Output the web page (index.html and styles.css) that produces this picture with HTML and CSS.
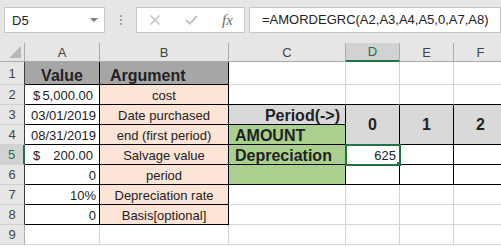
FILE: index.html
```html
<!DOCTYPE html>
<html lang="en">
  <head>
    <meta charset="UTF-8" />
    <title>AMORDEGRC</title>
    <link rel="stylesheet" href="styles.css">
  </head>
  <body>
    <div class="formula-bar">
      <div class="name-box"><span>D5</span><i class="drop"></i></div>
      <div class="grip"><i></i><i></i><i></i></div>
      <div class="fx-buttons">
        <svg class="btn-x" width="10" height="10" viewBox="0 0 10 10">
          <path d="M0.5 0.5 L9.5 9.5 M9.5 0.5 L0.5 9.5" stroke="#bdbdbd" stroke-width="1.3" fill="none" />
        </svg>
        <svg class="btn-ok" width="13" height="10" viewBox="0 0 13 10">
          <path d="M1 5 L4.8 8.6 L12 1" stroke="#c2c2c2" stroke-width="2" fill="none" />
        </svg>
        <span class="fx">fx</span>
      </div>
      <div class="formula">=AMORDEGRC(A2,A3,A4,A5,0,A7,A8)</div>
    </div>

    <div class="sheet">
      <div class="corner"><i></i></div>
      <div class="ch">A</div>
      <div class="ch">B</div>
      <div class="ch">C</div>
      <div class="ch active">D</div>
      <div class="ch">E</div>
      <div class="ch">F</div>

      <div class="rh edge">1</div>
      <div class="cell bx hd ctr">Value</div>
      <div class="cell bx hd arg">Argument</div>
      <div class="cell"></div>
      <div class="cell"></div>
      <div class="cell"></div>
      <div class="cell"></div>

      <div class="rh edge">2</div>
      <div class="cell bx acct"><span>$</span><span>5,000.00</span></div>
      <div class="cell bx peach ctr">cost</div>
      <div class="cell bb"></div>
      <div class="cell bb"></div>
      <div class="cell bb"></div>
      <div class="cell bb"></div>

      <div class="rh edge">3</div>
      <div class="cell bx num">03/01/2019</div>
      <div class="cell bx peach ctr">Date purchased</div>
      <div class="cell bx grey bold right">Period(-&gt;)</div>
      <div class="cell bx grey merge">0</div>
      <div class="cell bx grey merge">1</div>
      <div class="cell bx grey merge">2</div>

      <div class="rh edge">4</div>
      <div class="cell bx num">08/31/2019</div>
      <div class="cell bx peach ctr">end (first period)</div>
      <div class="cell bx green bold label">AMOUNT</div>

      <div class="rh edge active">5</div>
      <div class="cell bx acct"><span>$</span><span>200.00</span></div>
      <div class="cell bx peach ctr">Salvage value</div>
      <div class="cell bx green bold label">Depreciation</div>
      <div class="cell bx num sel">625</div>
      <div class="cell bx"></div>
      <div class="cell bx"></div>

      <div class="rh edge">6</div>
      <div class="cell bx num">0</div>
      <div class="cell bx peach ctr">period</div>
      <div class="cell bx green"></div>
      <div class="cell bx"></div>
      <div class="cell bx"></div>
      <div class="cell bx"></div>

      <div class="rh edge">7</div>
      <div class="cell bx num">10%</div>
      <div class="cell bx peach ctr">Depreciation rate</div>
      <div class="cell"></div>
      <div class="cell"></div>
      <div class="cell"></div>
      <div class="cell"></div>

      <div class="rh edge">8</div>
      <div class="cell bx num">0</div>
      <div class="cell bx peach ctr">Basis[optional]</div>
      <div class="cell"></div>
      <div class="cell"></div>
      <div class="cell"></div>
      <div class="cell"></div>

      <div class="rh">9</div>
      <div class="cell"></div>
      <div class="cell"></div>
      <div class="cell"></div>
      <div class="cell"></div>
      <div class="cell"></div>
      <div class="cell"></div>
    </div>
  </body>
</html>
```

FILE: styles.css
```css
body {
  margin: 0;
  width: 501px;
  height: 247px;
  overflow: hidden;
  background: #fff;
  font-family: "Liberation Sans", Arial, sans-serif;
}

/* formula bar */
.formula-bar {
  display: flex;
  align-items: flex-start;
  height: 43px;
  padding-top: 7px;
  box-sizing: border-box;
  background: #e6e6e6;
}

.name-box {
  display: flex;
  align-items: center;
  justify-content: space-between;
  width: 101px;
  height: 26px;
  margin-left: 4px;
  padding: 0 6px 0 7px;
  box-sizing: border-box;
  border: 1px solid #c6c6c6;
  background: #fff;
  font-size: 13px;
  color: #222;
}

.drop {
  border-left: 4px solid transparent;
  border-right: 4px solid transparent;
  border-top: 4px solid #7a7a7a;
}

.grip {
  display: flex;
  flex-direction: column;
  align-items: center;
  justify-content: center;
  gap: 2px;
  width: 31px;
  height: 26px;
}

.grip i {
  width: 2px;
  height: 2px;
  background: #a3a3a3;
}

.fx-buttons {
  display: flex;
  align-items: center;
  width: 109px;
  height: 26px;
  padding-left: 13px;
  box-sizing: border-box;
  border: 1px solid #c6c6c6;
  background: #fff;
}

.btn-ok {
  margin-left: 25px;
}

.fx {
  margin-left: 24px;
  font-family: "Liberation Serif", "Times New Roman", serif;
  font-style: italic;
  font-size: 15px;
  color: #6c6c6c;
}

.formula {
  flex: 1;
  height: 26px;
  margin-left: 4px;
  padding-left: 12px;
  box-sizing: border-box;
  border: 1px solid #c6c6c6;
  background: #fff;
  font-size: 13px;
  line-height: 24px;
  color: #222;
}

/* sheet grid */
.sheet {
  display: grid;
  grid-template-columns: 25px 75px 129px 117px 54px 54px 54px;
  grid-template-rows: 19px 23px repeat(8, 20px);
}

.corner {
  display: flex;
  align-items: flex-end;
  justify-content: flex-end;
  padding: 0 3px 3px 0;
  background: #e6e6e6;
  border-right: 1px solid #ababab;
  border-bottom: 1px solid #ababab;
}

.corner i {
  border-left: 12px solid transparent;
  border-bottom: 12px solid #b8b8b8;
}

.ch {
  display: flex;
  align-items: center;
  justify-content: center;
  background: #e6e6e6;
  border-right: 1px solid #ababab;
  border-bottom: 1px solid #ababab;
  font-size: 13px;
  color: #444;
}

.ch.active {
  background: #d2d2d2;
  border-bottom: 2px solid #217346;
  color: #217346;
}

.rh {
  display: flex;
  align-items: center;
  justify-content: center;
  background: #e6e6e6;
  border-right: 1px solid #ababab;
  border-bottom: 1px solid #d0d0d0;
  font-size: 13px;
  color: #444;
}

.rh.edge {
  border-right-color: #3c3c3c;
}

.rh.active {
  background: #d2d2d2;
  border-right: 2px solid #217346;
  color: #217346;
}

.cell {
  display: flex;
  align-items: flex-end;
  padding: 0 3px;
  overflow: hidden;
  white-space: nowrap;
  border-right: 1px solid #d4d4d4;
  border-bottom: 1px solid #d4d4d4;
  font-size: 13px;
  line-height: 17px;
  color: #222;
}

.bx {
  border-color: #000;
}

.bb {
  border-bottom-color: #000;
}

.ctr {
  justify-content: center;
}

.num {
  justify-content: flex-end;
}

.acct {
  justify-content: space-between;
  padding: 0 6px 0 8px;
}

.hd {
  background: #a6a6a6;
  font-weight: bold;
  font-size: 16px;
}

.arg {
  padding-left: 10px;
}

.bold {
  font-weight: bold;
  font-size: 16px;
}

.right {
  justify-content: flex-end;
  padding-right: 5px;
}

.label {
  padding-left: 6px;
}

.peach {
  background: #fce4d6;
}

.green {
  background: #a9d08e;
}

.grey {
  background: #d9d9d9;
}

.merge {
  grid-row: span 2;
  align-items: center;
  justify-content: center;
  font-weight: bold;
  font-size: 16px;
}

.sel {
  position: relative;
  outline: 2px solid #217346;
  outline-offset: -1px;
}

.sel::after {
  content: "";
  position: absolute;
  right: -4px;
  bottom: -4px;
  width: 5px;
  height: 5px;
  background: #217346;
  border: 1px solid #fff;
}
```
